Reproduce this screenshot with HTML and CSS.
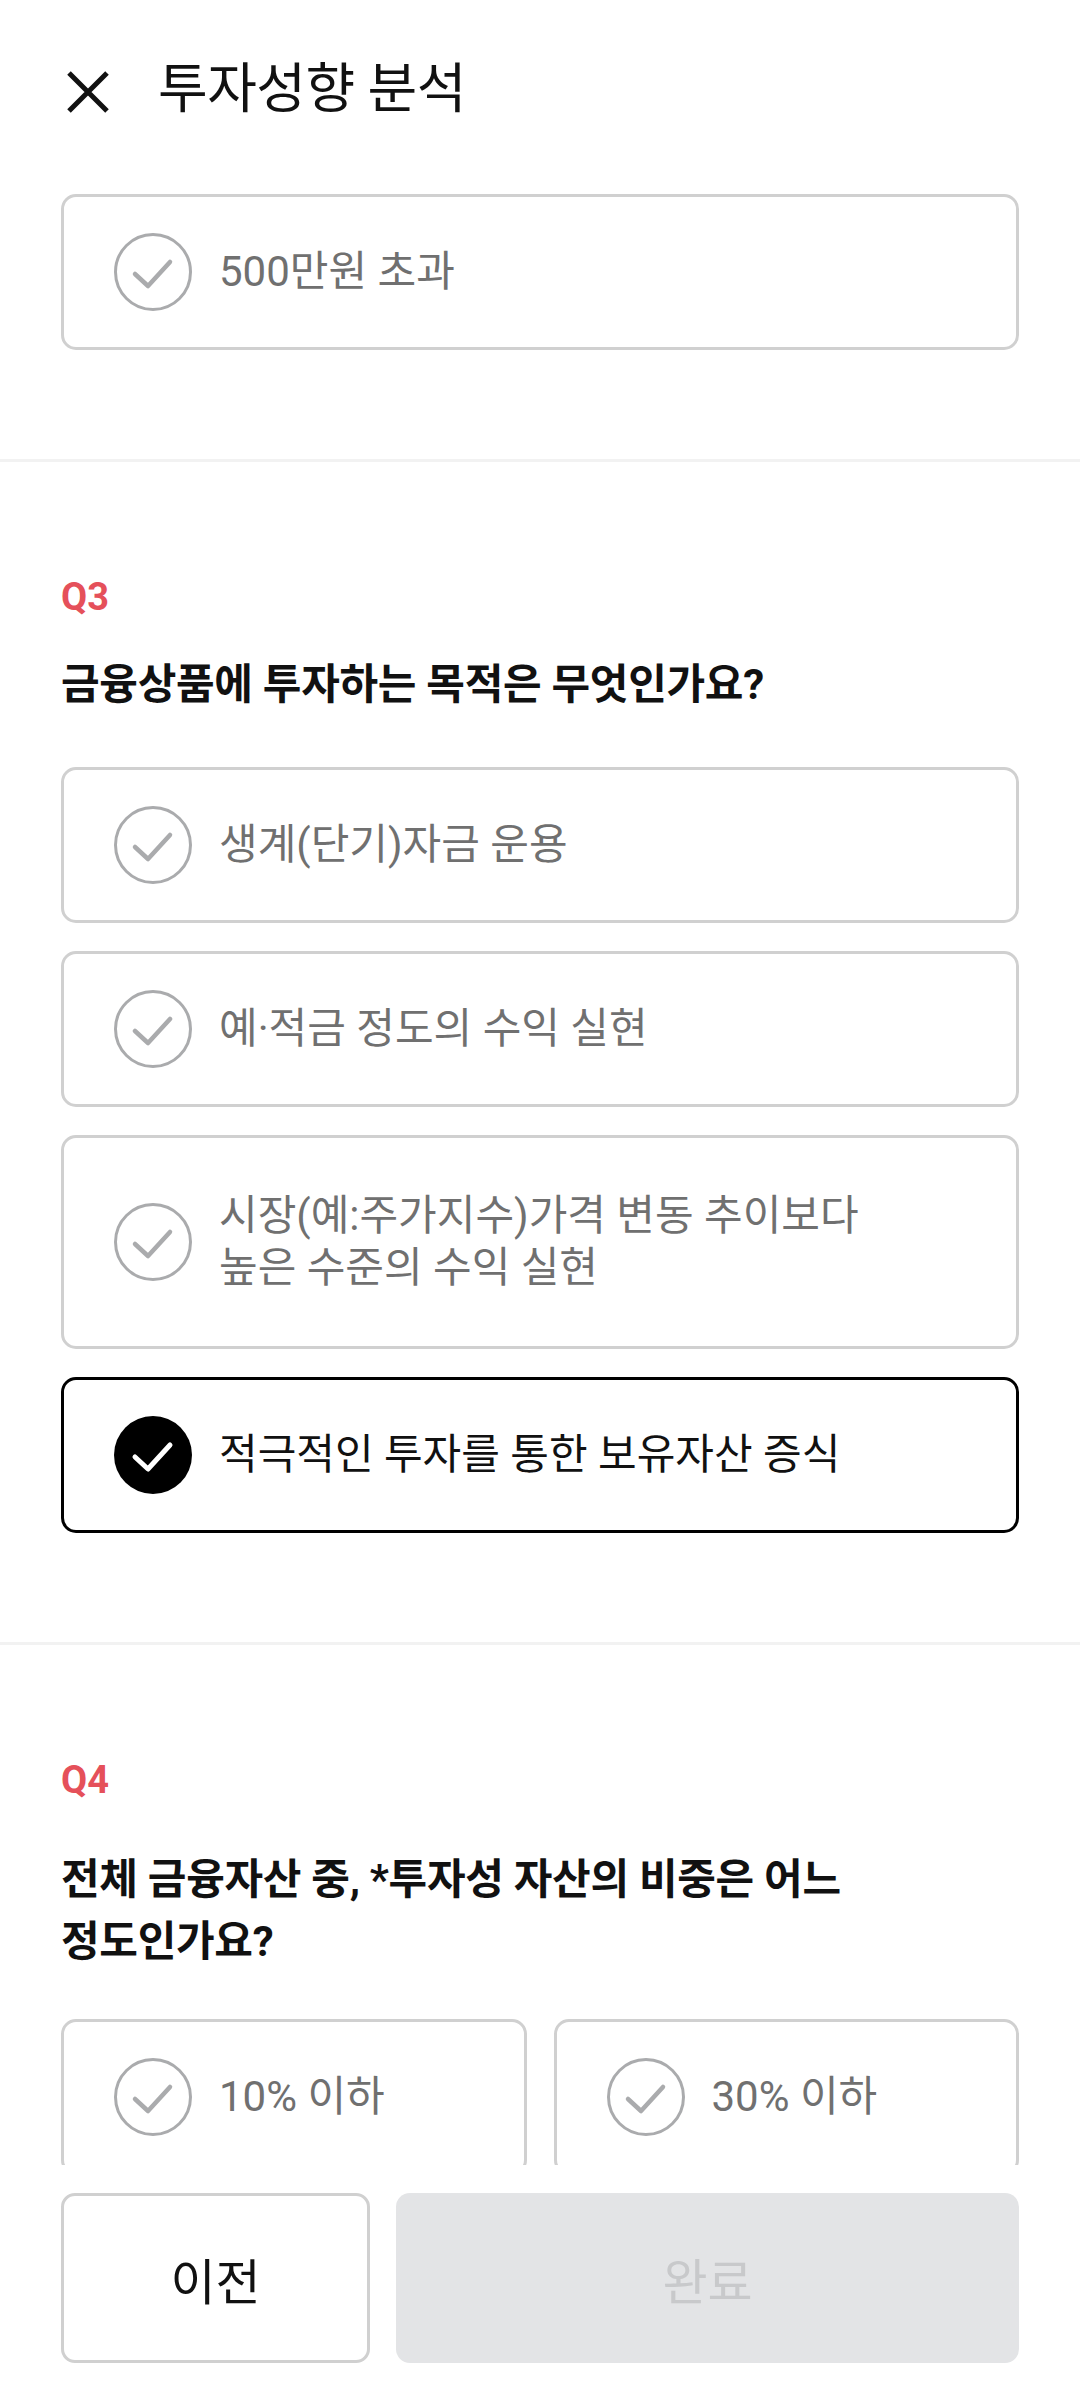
FILE: index.html
```html
<!DOCTYPE html>
<html lang="ko">
<head>
<meta charset="utf-8">
<title>투자성향 분석</title>
<link rel="stylesheet" href="styles.css">
</head>
<body>
<div class="app">
  <header class="topbar">
    <button class="close" aria-label="닫기">
      <svg viewBox="0 0 46 46" width="46" height="46"><path d="M4 4 L42 42 M42 4 L4 42" stroke="#111" stroke-width="5" stroke-linecap="butt" fill="none"/></svg>
    </button>
    <h1 class="title">투자성향 분석</h1>
  </header>

  <main class="scroll">
    <section class="section section-first">
      <ul class="options">
        <li class="option">
          <svg class="check" viewBox="0 0 78 78"><circle cx="39" cy="39" r="37.5" fill="none" stroke="#aaabad" stroke-width="3"/><path d="M21 41 L34 53 L56 29" fill="none" stroke="#aaabad" stroke-width="4.5" stroke-linecap="round" stroke-linejoin="round"/></svg>
          <span class="label">500만원 초과</span>
        </li>
      </ul>
    </section>

    <section class="section">
      <p class="q-num">Q3</p>
      <h2 class="q-text">금융상품에 투자하는 목적은 무엇인가요?</h2>
      <ul class="options">
        <li class="option">
          <svg class="check" viewBox="0 0 78 78"><circle cx="39" cy="39" r="37.5" fill="none" stroke="#aaabad" stroke-width="3"/><path d="M21 41 L34 53 L56 29" fill="none" stroke="#aaabad" stroke-width="4.5" stroke-linecap="round" stroke-linejoin="round"/></svg>
          <span class="label">생계(단기)자금 운용</span>
        </li>
        <li class="option">
          <svg class="check" viewBox="0 0 78 78"><circle cx="39" cy="39" r="37.5" fill="none" stroke="#aaabad" stroke-width="3"/><path d="M21 41 L34 53 L56 29" fill="none" stroke="#aaabad" stroke-width="4.5" stroke-linecap="round" stroke-linejoin="round"/></svg>
          <span class="label">예·적금 정도의 수익 실현</span>
        </li>
        <li class="option option-multi">
          <svg class="check" viewBox="0 0 78 78"><circle cx="39" cy="39" r="37.5" fill="none" stroke="#aaabad" stroke-width="3"/><path d="M21 41 L34 53 L56 29" fill="none" stroke="#aaabad" stroke-width="4.5" stroke-linecap="round" stroke-linejoin="round"/></svg>
          <span class="label">시장(예:주가지수)가격 변동 추이보다<br>높은 수준의 수익 실현</span>
        </li>
        <li class="option option-selected">
          <svg class="check" viewBox="0 0 78 78"><circle cx="39" cy="39" r="39" fill="#000"/><path d="M21 41 L34 53 L56 29" fill="none" stroke="#fff" stroke-width="5" stroke-linecap="round" stroke-linejoin="round"/></svg>
          <span class="label">적극적인 투자를 통한 보유자산 증식</span>
        </li>
      </ul>
    </section>

    <section class="section">
      <p class="q-num">Q4</p>
      <h2 class="q-text q-text-wide">전체 금융자산 중, *투자성 자산의 비중은 어느 정도인가요?</h2>
      <ul class="options options-grid">
        <li class="option">
          <svg class="check" viewBox="0 0 78 78"><circle cx="39" cy="39" r="37.5" fill="none" stroke="#aaabad" stroke-width="3"/><path d="M21 41 L34 53 L56 29" fill="none" stroke="#aaabad" stroke-width="4.5" stroke-linecap="round" stroke-linejoin="round"/></svg>
          <span class="label">10% 이하</span>
        </li>
        <li class="option">
          <svg class="check" viewBox="0 0 78 78"><circle cx="39" cy="39" r="37.5" fill="none" stroke="#aaabad" stroke-width="3"/><path d="M21 41 L34 53 L56 29" fill="none" stroke="#aaabad" stroke-width="4.5" stroke-linecap="round" stroke-linejoin="round"/></svg>
          <span class="label">30% 이하</span>
        </li>
      </ul>
    </section>
  </main>

  <footer class="bottom-bar">
    <button class="btn btn-prev">이전</button>
    <button class="btn btn-done" disabled>완료</button>
  </footer>
</div>
</body>
</html>
```

FILE: styles.css
```css
* {
  box-sizing: border-box;
}

html, body {
  margin: 0;
  padding: 0;
  background: #fff;
}

body {
  font-family: Roboto, "Noto Sans CJK KR", sans-serif;
  color: #111;
}

.app {
  display: flex;
  flex-direction: column;
  height: 100vh;
  overflow: hidden;
}

.topbar {
  flex: none;
  height: 180px;
  display: flex;
  align-items: center;
  padding-left: 65px;
}

.close {
  border: 0;
  background: none;
  padding: 0;
  width: 46px;
  height: 46px;
  display: flex;
  margin-top: 4px;
}

.close svg {
  display: block;
}

.title {
  margin: 0 0 0 47px;
  font-size: 54px;
  font-weight: 400;
  line-height: 60px;
  letter-spacing: -0.5px;
  color: #111;
}

.scroll {
  flex: 1;
  overflow: hidden;
}

.section {
  padding: 112px 61px 109px;
  border-bottom: 3px solid #f2f2f2;
}

.section-first {
  padding-top: 14px;
}

.q-num {
  margin: 0;
  font-family: Roboto, sans-serif;
  font-weight: 700;
  font-size: 38px;
  line-height: 46px;
  color: #e5505a;
}

.q-text {
  margin: 34px 0 51px;
  font-size: 42px;
  font-weight: 700;
  line-height: 62px;
  letter-spacing: -0.3px;
  color: #111;
  word-break: keep-all;
  max-width: 880px;
}

.q-text-wide {
  margin-top: 46px;
  margin-bottom: 46px;
}

.options {
  list-style: none;
  margin: 0;
  padding: 0;
  display: flex;
  flex-direction: column;
  gap: 28px;
}

.options-grid {
  display: grid;
  grid-template-columns: 1fr 1fr;
  gap: 28px 27px;
}

.option {
  display: flex;
  align-items: center;
  gap: 27px;
  padding: 49px 50px;
  border: 3px solid #d0d0d0;
  border-radius: 15px;
  background: #fff;
}

.option-multi {
  padding-top: 52px;
  padding-bottom: 52px;
}

.option-selected {
  border-color: #000;
}

.check {
  flex: none;
  width: 78px;
  height: 78px;
  margin: -13px 0;
  display: block;
}

.label {
  font-size: 42px;
  line-height: 52px;
  color: #707070;
  font-weight: 400;
}

.option-selected .label {
  color: #111;
}

.bottom-bar {
  flex: none;
  display: flex;
  gap: 26px;
  padding: 28px 61px 39px;
  background: #fff;
}

.btn {
  height: 170px;
  border-radius: 14px;
  font-family: Roboto, "Noto Sans CJK KR", sans-serif;
  font-size: 49px;
  font-weight: 400;
  padding: 0;
}

.btn-prev {
  width: 309px;
  flex: none;
  background: #fff;
  border: 3px solid #d0d0d0;
  color: #111;
}

.btn-done {
  flex: 1;
  background: #e3e4e6;
  border: 0;
  color: #c8c9cb;
}
```
